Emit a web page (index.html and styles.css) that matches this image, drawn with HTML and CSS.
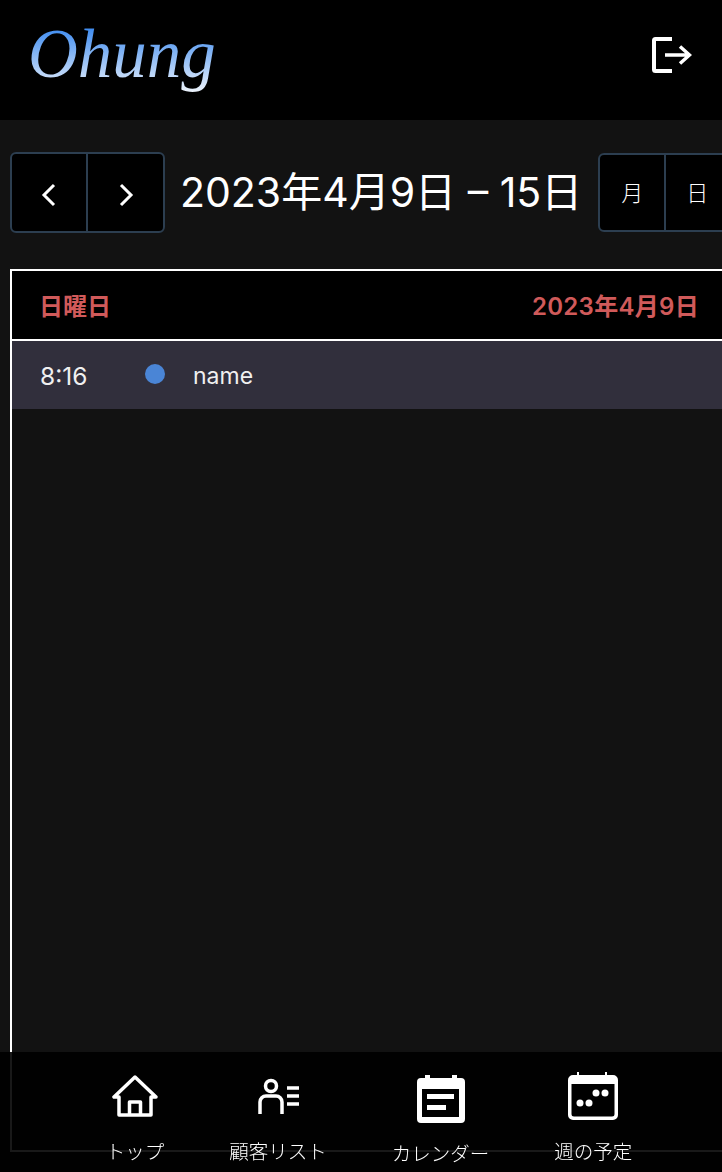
FILE: index.html
```html
<!DOCTYPE html>
<html lang="ja">
<head>
    <meta charset="UTF-8">
    <meta name="viewport" content="width=device-width, initial-scale=1.0">
    <title>Ohung</title>
    <link rel="stylesheet" href="styles.css">
</head>
<body>
    <header class="app-header">
        <span class="logo">Ohung</span>
        <button class="logout" aria-label="ログアウト">
            <svg width="40" height="36" viewBox="0 0 40 36" fill="none" stroke="#fff">
                <path d="M20 2H3.500a1.500 1.500 0 0 0-1.500 1.500V32.500a1.500 1.500 0 0 0 1.500 1.500H20" stroke-width="4"/>
                <path d="M13 18H37M28 9.500L37.500 18L28 26.500" stroke-width="3.500"/>
            </svg>
        </button>
    </header>

    <main class="content">
        <div class="toolbar">
            <div class="btn-group nav-group">
                <button class="btn nav-btn" aria-label="前へ">
                    <svg width="16" height="24" viewBox="0 0 16 24" fill="none" stroke="#fff" stroke-width="3"><path d="M13 2L3 12L13 22"/></svg>
                </button>
                <button class="btn nav-btn" aria-label="次へ">
                    <svg width="16" height="24" viewBox="0 0 16 24" fill="none" stroke="#fff" stroke-width="3"><path d="M3 2L13 12L3 22"/></svg>
                </button>
            </div>
            <h2 class="range-title">2023年4月9日 – 15日</h2>
            <div class="btn-group view-group">
                <button class="btn view-btn">月</button>
                <button class="btn view-btn">日</button>
            </div>
        </div>

        <section class="list-table">
            <div class="list-head">
                <span>日曜日</span>
                <span class="head-date">2023年4月9日</span>
            </div>
            <div class="list-row">
                <span class="row-time">8:16</span>
                <span class="row-dot"></span>
                <span class="row-name">name</span>
            </div>
        </section>
    </main>

    <nav class="tabbar">
        <a class="tab">
            <svg width="46" height="42" viewBox="0 0 46 42" fill="none" stroke="#fff" stroke-width="3.500" stroke-linejoin="round">
                <path d="M23 2L2 22H7V40H39V22H44Z"/>
                <path d="M17.500 40V27H28.500V40"/>
            </svg>
            <span class="tab-label">トップ</span>
        </a>
        <a class="tab">
            <svg width="46" height="42" viewBox="0 0 46 42" fill="none" stroke="#fff" stroke-width="3.500">
                <circle cx="16" cy="11" r="5.500"/>
                <path d="M5 39V27a6 6 0 0 1 6-6H21a6 6 0 0 1 6 6V39"/>
                <path d="M32 13H44M32 21H44M32 29H44"/>
            </svg>
            <span class="tab-label">顧客リスト</span>
        </a>
        <a class="tab tab-active">
            <svg width="48" height="48" viewBox="0 0 48 48">
                <path fill="#fff" d="M8 0H13V3H35V0H40V3H44a4 4 0 0 1 4 4V44a4 4 0 0 1-4 4H4a4 4 0 0 1-4-4V7a4 4 0 0 1 4-4H8Z"/>
                <rect x="5" y="14" width="37" height="28" fill="#000"/>
                <rect x="10" y="19" width="27" height="5" fill="#fff"/>
                <rect x="10" y="30" width="19" height="5" fill="#fff"/>
            </svg>
            <span class="tab-label">カレンダー</span>
        </a>
        <a class="tab">
            <svg width="50" height="50" viewBox="0 0 50 50">
                <path fill="#fff" d="M9 0H11V3H37V0H39V3H45a5 5 0 0 1 5 5V43a5 5 0 0 1-5 5H5a5 5 0 0 1-5-5V8a5 5 0 0 1 5-5H9Z"/>
                <path fill="#000" d="M3.500 12H46.500V42a2.500 2.500 0 0 1-2.500 2.500H6a2.500 2.500 0 0 1-2.500-2.500Z"/>
                <circle cx="12" cy="31" r="3.500" fill="#fff"/>
                <circle cx="21" cy="31" r="3.500" fill="#fff"/>
                <circle cx="28" cy="21" r="3.500" fill="#fff"/>
                <circle cx="37" cy="21" r="3.500" fill="#fff"/>
            </svg>
            <span class="tab-label">週の予定</span>
        </a>
    </nav>
</body>
</html>
```

FILE: styles.css
```css
* {
    box-sizing: border-box;
}
html, body {
    height: 100%;
}
body {
    margin: 0;
    background: #121212;
    color: #fff;
    font-family: Inter, "Noto Sans CJK JP", sans-serif;
    overflow: hidden;
}
button {
    font-family: inherit;
    color: #fff;
    padding: 0;
    border: none;
    background: none;
}
.app-header {
    height: 120px;
    background: #000;
    display: flex;
    align-items: flex-start;
    justify-content: space-between;
    padding: 0 30px 0 28px;
}
.logo {
    font-family: "Liberation Serif", serif;
    font-style: italic;
    font-size: 69px;
    line-height: 108px;
    padding-bottom: 4px;
    background: linear-gradient(180deg, #3f8cf0 25%, #f2f6fc 84%);
    -webkit-background-clip: text;
    background-clip: text;
    color: transparent;
}
.logout {
    display: flex;
    margin-top: 37px;
}
.content {
    padding: 32px 0 0 10px;
}
.toolbar {
    display: flex;
    align-items: center;
    width: 760px;
    height: 81px;
}
.btn-group {
    display: flex;
    flex-shrink: 0;
    background: #000;
    border: 2px solid #2c3e50;
    border-radius: 6px;
}
.btn {
    display: flex;
    align-items: center;
    justify-content: center;
}
.nav-group {
    height: 81px;
}
.nav-btn {
    width: 74px;
    padding-top: 4px;
}
.nav-btn + .nav-btn {
    border-left: 2px solid #2c3e50;
    width: 77px;
}
.range-title {
    margin: 0 16px 0 15px;
    font-size: 41px;
    font-weight: 400;
    line-height: 1;
    white-space: nowrap;
}
.view-group {
    height: 79px;
}
.view-btn {
    width: 64px;
    font-size: 22px;
    font-weight: 300;
    padding-bottom: 4px;
}
.view-btn + .view-btn {
    border-left: 2px solid #2c3e50;
}
.list-table {
    margin-top: 36px;
    width: 730px;
    height: 883px;
    border: 2px solid #fff;
}
.list-head {
    height: 70px;
    background: #000;
    border-bottom: 2px solid #fff;
    display: flex;
    align-items: center;
    justify-content: space-between;
    padding: 0 39px 2px 27px;
    color: #d05a5a;
    font-size: 24px;
    font-weight: 600;
}
.head-date {
    letter-spacing: 0.3px;
}
.list-row {
    height: 68px;
    background: #312f3c;
    display: flex;
    align-items: center;
    padding-left: 28px;
    font-size: 23px;
    color: #f0f0f0;
}
.row-time {
    width: 105px;
    font-size: 24.500px;
    padding-top: 1px;
}
.row-dot {
    width: 20px;
    height: 20px;
    margin-right: 28px;
    margin-top: -2px;
    border-radius: 50%;
    background: #4a85d6;
}
.row-name {
    padding-top: 2px;
}
.tabbar {
    position: fixed;
    left: 0;
    right: 0;
    bottom: 0;
    height: 120px;
    background: rgba(0, 0, 0, 0.9);
    display: flex;
    justify-content: center;
    gap: 65px;
    padding-left: 16px;
}
.tab {
    display: flex;
    flex-direction: column;
    align-items: center;
    padding-top: 23px;
}
.tab-label {
    margin-top: 22px;
    font-size: 19.500px;
    font-weight: 300;
    line-height: 26px;
    color: #fff;
    white-space: nowrap;
}
.tab-active {
    padding-top: 23px;
}
.tab-active .tab-label {
    margin-top: 18px;
}
.tab:last-child {
    padding-top: 20px;
}
.tab:last-child .tab-label {
    margin-top: 17px;
}
```
